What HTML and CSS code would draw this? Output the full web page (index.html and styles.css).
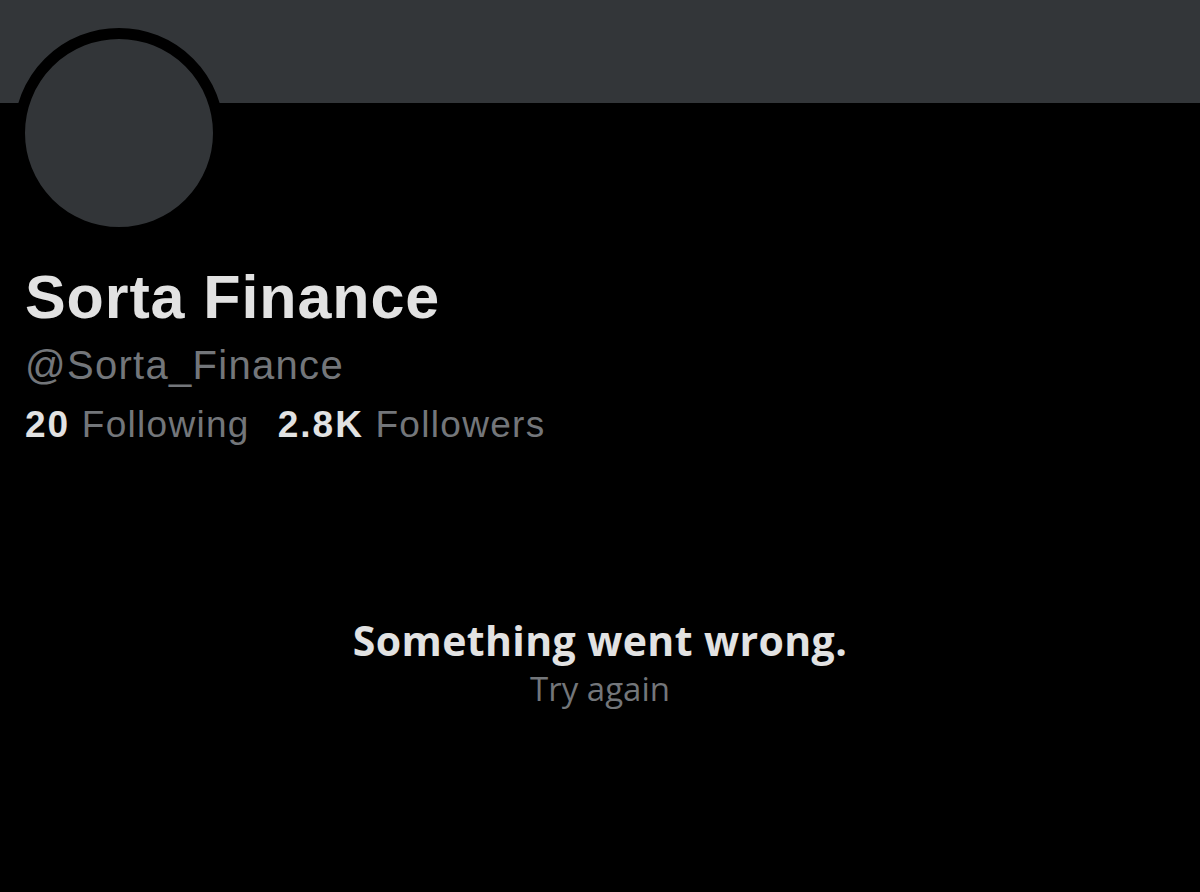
FILE: index.html
```html
<!DOCTYPE html>
<html>
<head>
<meta charset="utf-8">
<link rel="stylesheet" href="styles.css">
</head>
<body>
<div class="page">
  <div class="banner"></div>
  <div class="profile">
    <div class="avatar"></div>
    <h1 class="name">Sorta Finance</h1>
    <div class="handle">@Sorta_Finance</div>
    <div class="stats">
      <span class="stat"><b>20</b> Following</span>
      <span class="stat"><b>2.8K</b> Followers</span>
    </div>
  </div>
  <div class="error">
    <div class="error-title">Something went wrong.</div>
    <div class="error-retry">Try again</div>
  </div>
</div>
</body>
</html>
```

FILE: styles.css
```css
html, body {
  margin: 0;
  padding: 0;
  background: #000;
}
.page {
  width: 1200px;
  height: 892px;
  background: #000;
  font-family: "Liberation Sans", Arial, sans-serif;
  overflow: hidden;
}
.banner {
  height: 103px;
  background: #333639;
}
.profile {
  position: relative;
  padding: 0 25px;
}
.avatar {
  position: absolute;
  left: 14px;
  top: -75px;
  width: 188px;
  height: 188px;
  border: 11px solid #000;
  border-radius: 50%;
  background: #323538;
}
.name {
  margin: 0;
  padding-top: 158px;
  font-size: 61px;
  line-height: 72px;
  font-weight: 700;
  color: #e2e2e2;
  letter-spacing: 0.9px;
}
.handle {
  margin-top: 4px;
  font-size: 40px;
  line-height: 56px;
  color: #73767a;
  letter-spacing: 1.3px;
}
.stats {
  display: flex;
  gap: 28px;
  margin-top: 6px;
  font-size: 37px;
  line-height: 52px;
  color: #73767a;
  letter-spacing: 1.3px;
}
.stat b {
  color: #e2e2e2;
  font-weight: 700;
  letter-spacing: 2px;
}
.error {
  margin-top: 162px;
  text-align: center;
  font-family: "Open Sans", "Noto Sans", sans-serif;
}
.error-title {
  font-size: 41px;
  line-height: 54px;
  font-weight: 700;
  color: #e2e2e2;
  letter-spacing: 0.4px;
}
.error-retry {
  font-size: 33px;
  line-height: 44px;
  color: #73767a;
}
```
